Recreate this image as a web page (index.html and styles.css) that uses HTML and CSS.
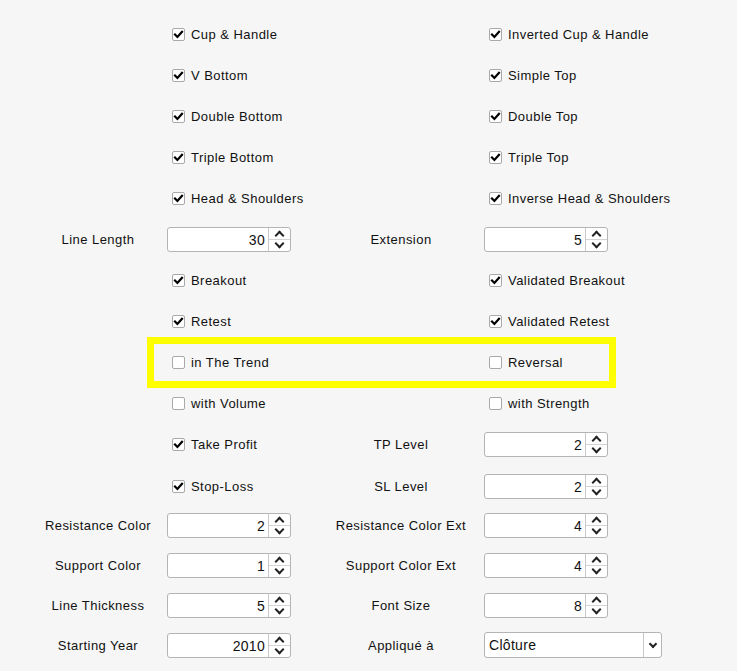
FILE: index.html
```html
<!DOCTYPE html>
<html>
<head>
<meta charset="utf-8">
<link rel="stylesheet" href="styles.css">
</head>
<body>
<div class="form">
  <div class="highlight"></div>

  <div class="row">
    <div></div>
    <label class="check"><span class="box"><svg viewBox="0 0 11 11"><path d="M2 5.6 L4.4 8 L9 2.8"/></svg></span>Cup &amp; Handle</label>
    <div></div>
    <label class="check"><span class="box"><svg viewBox="0 0 11 11"><path d="M2 5.6 L4.4 8 L9 2.8"/></svg></span>Inverted Cup &amp; Handle</label>
  </div>
  <div class="row">
    <div></div>
    <label class="check"><span class="box"><svg viewBox="0 0 11 11"><path d="M2 5.6 L4.4 8 L9 2.8"/></svg></span>V Bottom</label>
    <div></div>
    <label class="check"><span class="box"><svg viewBox="0 0 11 11"><path d="M2 5.6 L4.4 8 L9 2.8"/></svg></span>Simple Top</label>
  </div>
  <div class="row">
    <div></div>
    <label class="check"><span class="box"><svg viewBox="0 0 11 11"><path d="M2 5.6 L4.4 8 L9 2.8"/></svg></span>Double Bottom</label>
    <div></div>
    <label class="check"><span class="box"><svg viewBox="0 0 11 11"><path d="M2 5.6 L4.4 8 L9 2.8"/></svg></span>Double Top</label>
  </div>
  <div class="row">
    <div></div>
    <label class="check"><span class="box"><svg viewBox="0 0 11 11"><path d="M2 5.6 L4.4 8 L9 2.8"/></svg></span>Triple Bottom</label>
    <div></div>
    <label class="check"><span class="box"><svg viewBox="0 0 11 11"><path d="M2 5.6 L4.4 8 L9 2.8"/></svg></span>Triple Top</label>
  </div>
  <div class="row">
    <div></div>
    <label class="check"><span class="box"><svg viewBox="0 0 11 11"><path d="M2 5.6 L4.4 8 L9 2.8"/></svg></span>Head &amp; Shoulders</label>
    <div></div>
    <label class="check"><span class="box"><svg viewBox="0 0 11 11"><path d="M2 5.6 L4.4 8 L9 2.8"/></svg></span>Inverse Head &amp; Shoulders</label>
  </div>
  <div class="row">
    <div class="lbl">Line Length</div>
    <div class="spin"><span class="val">30</span><span class="btns"><span class="up"></span><span class="dn"></span></span></div>
    <div class="lbl mid">Extension</div>
    <div class="spin"><span class="val">5</span><span class="btns"><span class="up"></span><span class="dn"></span></span></div>
  </div>
  <div class="row">
    <div></div>
    <label class="check"><span class="box"><svg viewBox="0 0 11 11"><path d="M2 5.6 L4.4 8 L9 2.8"/></svg></span>Breakout</label>
    <div></div>
    <label class="check"><span class="box"><svg viewBox="0 0 11 11"><path d="M2 5.6 L4.4 8 L9 2.8"/></svg></span>Validated Breakout</label>
  </div>
  <div class="row">
    <div></div>
    <label class="check"><span class="box"><svg viewBox="0 0 11 11"><path d="M2 5.6 L4.4 8 L9 2.8"/></svg></span>Retest</label>
    <div></div>
    <label class="check"><span class="box"><svg viewBox="0 0 11 11"><path d="M2 5.6 L4.4 8 L9 2.8"/></svg></span>Validated Retest</label>
  </div>
  <div class="row">
    <div></div>
    <label class="check"><span class="box"></span>in The Trend</label>
    <div></div>
    <label class="check"><span class="box"></span>Reversal</label>
  </div>
  <div class="row">
    <div></div>
    <label class="check"><span class="box"></span>with Volume</label>
    <div></div>
    <label class="check"><span class="box"></span>with Strength</label>
  </div>
  <div class="row">
    <div></div>
    <label class="check"><span class="box"><svg viewBox="0 0 11 11"><path d="M2 5.6 L4.4 8 L9 2.8"/></svg></span>Take Profit</label>
    <div class="lbl mid">TP Level</div>
    <div class="spin"><span class="val">2</span><span class="btns"><span class="up"></span><span class="dn"></span></span></div>
  </div>
  <div class="row shifted">
    <div></div>
    <label class="check"><span class="box"><svg viewBox="0 0 11 11"><path d="M2 5.6 L4.4 8 L9 2.8"/></svg></span>Stop-Loss</label>
    <div class="lbl mid">SL Level</div>
    <div class="spin"><span class="val">2</span><span class="btns"><span class="up"></span><span class="dn"></span></span></div>
  </div>
  <div class="row short">
    <div class="lbl">Resistance Color</div>
    <div class="spin"><span class="val">2</span><span class="btns"><span class="up"></span><span class="dn"></span></span></div>
    <div class="lbl mid">Resistance Color Ext</div>
    <div class="spin"><span class="val">4</span><span class="btns"><span class="up"></span><span class="dn"></span></span></div>
  </div>
  <div class="row short">
    <div class="lbl">Support Color</div>
    <div class="spin"><span class="val">1</span><span class="btns"><span class="up"></span><span class="dn"></span></span></div>
    <div class="lbl mid">Support Color Ext</div>
    <div class="spin"><span class="val">4</span><span class="btns"><span class="up"></span><span class="dn"></span></span></div>
  </div>
  <div class="row short">
    <div class="lbl">Line Thickness</div>
    <div class="spin"><span class="val">5</span><span class="btns"><span class="up"></span><span class="dn"></span></span></div>
    <div class="lbl mid">Font Size</div>
    <div class="spin"><span class="val">8</span><span class="btns"><span class="up"></span><span class="dn"></span></span></div>
  </div>
  <div class="row short">
    <div class="lbl">Starting Year</div>
    <div class="spin"><span class="val">2010</span><span class="btns"><span class="up"></span><span class="dn"></span></span></div>
    <div class="lbl mid">Appliqué à</div>
    <div class="select"><span class="val">Clôture</span><span class="arrow"></span></div>
  </div>
</div>
</body>
</html>
```

FILE: styles.css
```css
html, body {
  margin: 0;
  padding: 0;
  background: #f6f6f6;
}
body {
  font-family: "Liberation Sans", Arial, sans-serif;
  font-size: 13px;
  letter-spacing: 0.45px;
  color: #111;
}
.form {
  position: relative;
  padding: 14px 0 0 30px;
}
.row {
  display: grid;
  grid-template-columns: 136px 169px 148px 180px;
  align-items: center;
  height: 41px;
}
.row.shifted {
  height: 40px;
  padding-top: 2px;
  box-sizing: border-box;
}
.row.short {
  height: 40px;
}
.row > * {
  min-width: 0;
}
.lbl {
  text-align: center;
  white-space: nowrap;
}
.lbl.mid {
  padding-right: 16px;
}
.check {
  display: flex;
  align-items: center;
  margin-left: 6px;
  white-space: nowrap;
}
.box {
  width: 11px;
  height: 11px;
  border: 1px solid #a9a9a9;
  border-radius: 2px;
  background: #fff;
  margin-right: 6px;
  flex: none;
  display: flex;
}
.box svg {
  width: 11px;
  height: 11px;
}
.box path {
  fill: none;
  stroke: #000;
  stroke-width: 2.2;
  stroke-linecap: square;
  stroke-linejoin: miter;
}
.spin {
  display: flex;
  width: 122px;
  height: 23px;
  border: 1px solid #b4b4b4;
  border-radius: 3px;
  background: #fff;
  margin-left: 1px;
}
.spin .val {
  flex: 1;
  text-align: right;
  padding-right: 3px;
  line-height: 25px;
  font-size: 14px;
  letter-spacing: 0.3px;
}
.btns {
  width: 21px;
  border-left: 1px solid #c8c8c8;
  display: flex;
  flex-direction: column;
}
.btns span {
  flex: 1;
  position: relative;
}
.btns .up {
  border-bottom: 1px solid #d4d4d4;
}
.btns span::after {
  content: "";
  position: absolute;
  left: 7px;
  width: 5px;
  height: 5px;
  border: solid #222;
  border-width: 2px 0 0 2px;
}
.btns .up::after {
  top: 4px;
  transform: rotate(45deg);
}
.btns .dn::after {
  top: 0px;
  transform: rotate(225deg);
}
.select {
  display: flex;
  width: 176px;
  height: 24px;
  border: 1px solid #b4b4b4;
  border-radius: 3px;
  background: #fff;
  margin-left: 1px;
}
.select .val {
  flex: 1;
  padding-left: 4px;
  line-height: 24px;
  font-size: 14px;
  letter-spacing: 0.3px;
}
.select .arrow {
  width: 17px;
  border-left: 1px solid #c8c8c8;
  position: relative;
}
.select .arrow::after {
  content: "";
  position: absolute;
  left: 6px;
  top: 8px;
  width: 4px;
  height: 4px;
  border: solid #222;
  border-width: 0 2px 2px 0;
  transform: rotate(45deg);
}
.highlight {
  position: absolute;
  left: 147px;
  top: 337px;
  width: 455px;
  height: 37px;
  border: 7px solid #ffff00;
  pointer-events: none;
}
```
